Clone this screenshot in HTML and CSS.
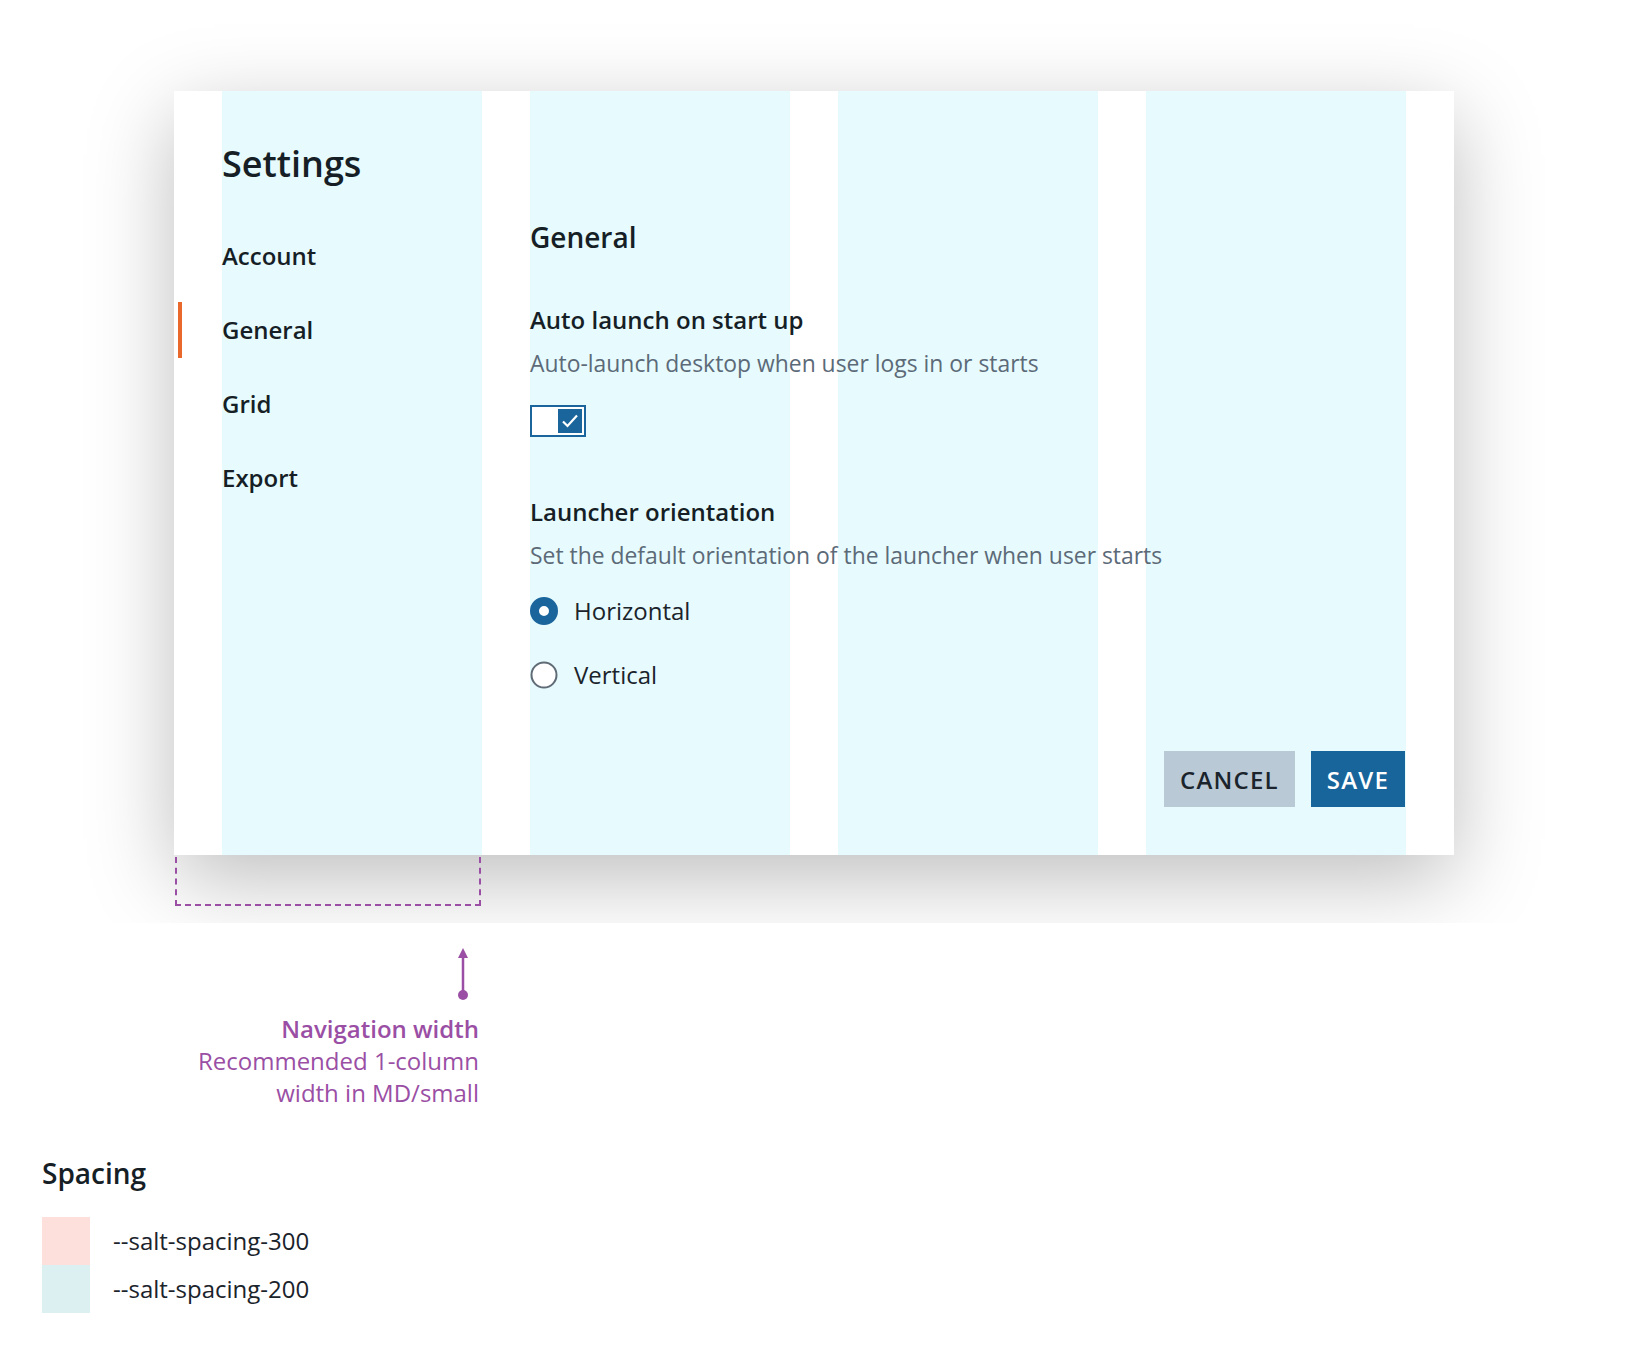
FILE: index.html
```html
<!DOCTYPE html>
<html lang="en">
<head>
<meta charset="utf-8">
<title>Settings - navigation width</title>
<link rel="stylesheet" href="styles.css">
</head>
<body>
<div class="stage">
  <div class="card">
    <div class="grid">
      <nav class="nav">
        <h1 class="nav-title">Settings</h1>
        <ul class="nav-list">
          <li class="nav-item">Account</li>
          <li class="nav-item active">General</li>
          <li class="nav-item">Grid</li>
          <li class="nav-item">Export</li>
        </ul>
      </nav>
      <section class="content">
        <h2 class="section-title">General</h2>
        <div class="field">
          <div class="field-title">Auto launch on start up</div>
          <div class="field-desc">Auto-launch desktop when user logs in or starts</div>
          <div class="switch">
            <span class="switch-thumb">
              <svg width="24" height="24" viewBox="0 0 24 24"><path d="M5 12.5 L9.5 17 L19 6.5" fill="none" stroke="#fff" stroke-width="2.2"/></svg>
            </span>
          </div>
        </div>
        <div class="field field-second">
          <div class="field-title">Launcher orientation</div>
          <div class="field-desc">Set the default orientation of the launcher when user starts</div>
          <div class="radio-group">
            <div class="radio">
              <svg class="radio-icon" width="28" height="28" viewBox="0 0 28 28"><circle cx="14" cy="14" r="9.5" fill="#fff" stroke="#1a659c" stroke-width="9"/></svg>
              <span>Horizontal</span>
            </div>
            <div class="radio">
              <svg class="radio-icon" width="28" height="28" viewBox="0 0 28 28"><circle cx="14" cy="14" r="12.5" fill="#fff" stroke="#5f6b75" stroke-width="2"/></svg>
              <span>Vertical</span>
            </div>
          </div>
        </div>
        <div class="actions">
          <button class="btn btn-secondary">Cancel</button>
          <button class="btn btn-primary">Save</button>
        </div>
      </section>
    </div>
  </div>
  <div class="measure"></div>
</div>

<div class="annotation">
  <svg class="arrow" width="12" height="54" viewBox="0 0 12 54"><path d="M6 0 L11 10 L1 10 Z" fill="#9a4fa5"/><line x1="6" y1="8" x2="6" y2="46" stroke="#9a4fa5" stroke-width="2.5"/><circle cx="6" cy="47" r="5" fill="#9a4fa5"/></svg>
  <div class="annotation-text">
    <strong>Navigation width</strong>
    <span>Recommended 1-column</span>
    <span>width in MD/small</span>
  </div>
</div>

<div class="legend">
  <h3 class="legend-title">Spacing</h3>
  <div class="legend-row"><span class="swatch swatch-300"></span><span class="legend-label">--salt-spacing-300</span></div>
  <div class="legend-row"><span class="swatch swatch-200"></span><span class="legend-label">--salt-spacing-200</span></div>
</div>
</body>
</html>
```

FILE: styles.css
```css
* { box-sizing: border-box; }

html, body {
  margin: 0;
  padding: 0;
  background: #ffffff;
}

body {
  font-family: "Open Sans", "Noto Sans", "Liberation Sans", sans-serif;
  color: #161e26;
}

.stage {
  height: 923px;
  overflow: hidden;
  padding-top: 91px;
  padding-left: 174px;
}

.card {
  width: 1280px;
  height: 764px;
  padding: 0 48px;
  box-shadow: 0 24px 80px rgba(0, 0, 0, 0.26);
  background-color: #ffffff;
  background-image:
    repeating-linear-gradient(to right, #e7fbfe 0px, #e7fbfe 260px, #ffffff 260px, #ffffff 308px),
    linear-gradient(#ffffff, #ffffff);
  background-origin: content-box, border-box;
  background-clip: content-box, border-box;
  display: flex;
  flex-direction: column;
}

.grid {
  flex: 1;
  padding: 49px 0 48px 0;
  display: grid;
  grid-template-columns: 260px 1fr;
  column-gap: 48px;
}

/* Navigation */
.nav-title {
  margin: 0;
  font-size: 36px;
  line-height: 48px;
  font-weight: 600;
  color: #161e26;
}

.nav-list {
  list-style: none;
  margin: 40px 0 0 0;
  padding: 0;
  display: flex;
  flex-direction: column;
  gap: 18px;
}

.nav-item {
  height: 56px;
  line-height: 56px;
  font-size: 24px;
  font-weight: 600;
  margin-left: -44px;
  padding-left: 40px;
  border-left: 4px solid transparent;
  color: #161e26;
}

.nav-item.active {
  border-left-color: #e8692b;
}

/* Content */
.content {
  display: flex;
  flex-direction: column;
  padding-top: 79px;
}

.section-title {
  margin: 0;
  font-size: 28px;
  line-height: 36px;
  font-weight: 600;
  color: #161e26;
}

.field {
  margin-top: 49px;
  display: flex;
  flex-direction: column;
  align-items: flex-start;
}

.field-second {
  margin-top: 59px;
}

.field-title {
  font-size: 24px;
  line-height: 32px;
  font-weight: 600;
  color: #161e26;
}

.field-desc {
  margin-top: 12px;
  font-size: 22.9px;
  line-height: 32px;
  color: #5c6a78;
}

.switch {
  margin-top: 25px;
  width: 56px;
  height: 32px;
  border: 2px solid #1a659c;
  background: #ffffff;
  padding: 2px;
  display: flex;
  justify-content: flex-end;
}

.switch-thumb {
  width: 24px;
  height: 24px;
  background: #1a659c;
  display: block;
}

.switch-thumb svg {
  display: block;
}

.radio-group {
  margin-top: 23px;
  display: flex;
  flex-direction: column;
  gap: 32px;
}

.radio {
  height: 32px;
  display: flex;
  align-items: center;
  gap: 16px;
  font-size: 24px;
  line-height: 32px;
  color: #1b232b;
}

.radio-icon {
  display: block;
  flex: none;
}

.actions {
  margin-top: auto;
  display: flex;
  justify-content: flex-end;
  gap: 16px;
  margin-right: 1px;
}

.btn {
  height: 56px;
  border: none;
  padding: 0 16px;
  font-family: "Open Sans", "Noto Sans", "Liberation Sans", sans-serif;
  font-size: 24px;
  font-weight: 600;
  letter-spacing: 1.2px;
  text-transform: uppercase;
  cursor: pointer;
}

.btn-secondary {
  background: #b9cad6;
  color: #1b242c;
}

.btn-primary {
  background: #17659b;
  color: #ffffff;
}

/* Dashed measurement box */
.measure {
  margin-top: 2px;
  margin-left: 1px;
  width: 306px;
  height: 49px;
  border: 2px dashed #9a4fa5;
  border-top: none;
}

/* Annotation */
.annotation {
  margin-left: 175px;
  width: 304px;
  display: flex;
  flex-direction: column;
  align-items: flex-end;
  padding-top: 25px;
}

.arrow {
  display: block;
  margin-right: 10px;
}

.annotation-text {
  margin-top: 11px;
  display: flex;
  flex-direction: column;
  align-items: flex-end;
  text-align: right;
  font-size: 24px;
  line-height: 32px;
  color: #9a4fa5;
}

.annotation-text strong {
  font-weight: 600;
}

/* Legend */
.legend {
  margin-top: 46px;
  margin-left: 42px;
}

.legend-title {
  margin: 0 0 26px 0;
  font-size: 28px;
  line-height: 36px;
  font-weight: 600;
  color: #161e26;
}

.legend-row {
  display: flex;
  align-items: center;
  gap: 23px;
  height: 48px;
}

.swatch {
  width: 48px;
  height: 48px;
  display: block;
}

.swatch-300 { background: #fde0dc; }
.swatch-200 { background: #dcf0f2; }

.legend-label {
  font-size: 24px;
  line-height: 32px;
  color: #1b232b;
}
```
